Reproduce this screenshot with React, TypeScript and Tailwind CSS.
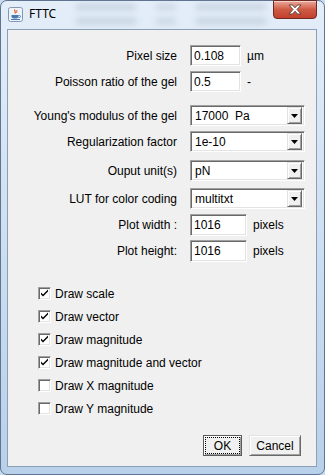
import React from "react";

const sunken =
  "bg-white border border-t-[#a0a0a0] border-l-[#a0a0a0] border-r-white border-b-white shadow-[inset_1px_1px_0_#696969,inset_-1px_-1px_0_#e3e3e3]";
const raised =
  "bg-[#f0f0f0] border border-t-[#e3e3e3] border-l-[#e3e3e3] border-r-[#696969] border-b-[#696969] shadow-[inset_1px_1px_0_#ffffff,inset_-1px_-1px_0_#a0a0a0]";

function JavaIcon() {
  return (
    <svg width="15" height="15" viewBox="0 0 15 15">
      <rect x="0.5" y="0.5" width="14" height="14" rx="2" fill="#eef3f9" stroke="#8497b0" />
      <path d="M7 2.5 C5.5 4 8.5 4.5 7 6.5" stroke="#e0561c" strokeWidth="1.2" fill="none" />
      <path d="M9 3 C8 4 9.5 5 8.5 6" stroke="#e0561c" strokeWidth="1" fill="none" />
      <path d="M3.5 8 h7 v1.5 c0 1.5 -1.5 2 -3.5 2 c-2 0 -3.5 -0.5 -3.5 -2 z" fill="#4a78b0" />
      <path d="M10.5 8.5 h1 a1 1 0 0 1 0 2 h-1" stroke="#4a78b0" strokeWidth="0.9" fill="none" />
      <rect x="3" y="12" width="9" height="1" fill="#4a78b0" />
    </svg>
  );
}

function CloseX() {
  return (
    <svg width="14" height="11" viewBox="0 0 14 11">
      <path
        d="M1 1 H4.5 L7 3.8 L9.5 1 H13 L9 5.5 L13 10 H9.5 L7 7.2 L4.5 10 H1 L5 5.5 Z"
        fill="#ffffff"
        stroke="#5a3a36"
        strokeWidth="0.9"
        strokeLinejoin="round"
      />
    </svg>
  );
}

function Arrow() {
  return (
    <svg width="7" height="4" viewBox="0 0 7 4">
      <path d="M0 0 H7 L3.5 4 Z" fill="#000" />
    </svg>
  );
}

function TextField({ value, w, h }: { value: string; w: string; h: string }) {
  return (
    <div className={`${sunken} ${w} ${h} flex items-center pl-[3px]`}>
      <span>{value}</span>
    </div>
  );
}

function Combo({ value }: { value: string }) {
  return (
    <div className={`${sunken} w-[115px] h-[21px] flex items-center pl-[4px] pr-[2px]`}>
      <span className="flex-1 whitespace-pre">{value}</span>
      <div className={`${raised} w-[15px] h-[17px] flex items-center justify-center`}>
        <Arrow />
      </div>
    </div>
  );
}

function Row({
  label,
  children,
  suffix,
  mt,
  h = "h-[21px]",
}: {
  label: string;
  children: React.ReactNode;
  suffix?: string;
  mt: string;
  h?: string;
}) {
  return (
    <div className={`flex items-center ${h} ${mt}`}>
      <div className="w-[169px] text-right">{label}</div>
      <div className="ml-[13px]">{children}</div>
      {suffix && <span className="ml-[6px]">{suffix}</span>}
    </div>
  );
}

function Check({ label, checked }: { label: string; checked: boolean }) {
  return (
    <div className="flex items-center h-[23px] pl-[30px]">
      <div className={`${sunken} w-[13px] h-[13px] flex items-center justify-center`}>
        {checked && (
          <svg width="9" height="9" viewBox="0 0 9 9">
            <path d="M1 3.5 L1 5.5 L3 7.5 L8 2.5 L8 0.5 L3 5.5 Z" fill="#000" />
          </svg>
        )}
      </div>
      <span className="ml-[4px]">{label}</span>
    </div>
  );
}

export default function App() {
  return (
    <div className="w-[325px] h-[475px] overflow-hidden bg-[#c9dcef] font-['Liberation_Sans',Arial,sans-serif] text-[12px] text-black leading-none">
      <div className="w-full h-full flex flex-col rounded-[7px] border border-[#5f7490] bg-gradient-to-b from-[#e4eef9] via-[#cddff1] to-[#b9d0ea]">
        {/* title bar */}
        <div className="h-[28px] flex relative">
          <div className="flex items-start pl-[7px] pt-[6px]">
            <JavaIcon />
            <span className="ml-[6px] mt-[1px] font-['Noto_Sans',sans-serif] text-[12px] text-[#000]">
              FTTC
            </span>
          </div>
          <div className="flex-1 flex flex-col gap-[8px] pt-[3px] pl-[20px] opacity-40">
            <div className="flex gap-[20px]">
              <div className="w-[60px] h-[6px] bg-[#9aa9bb] blur-[3px]" />
              <div className="w-[20px] h-[6px] bg-[#a6b4c4] blur-[3px]" />
              <div className="w-[70px] h-[6px] bg-[#9aa9bb] blur-[3px]" />
            </div>
            <div className="flex gap-[20px]">
              <div className="w-[60px] h-[6px] bg-[#9aa9bb] blur-[3px]" />
              <div className="w-[20px] h-[6px] bg-[#a6b4c4] blur-[3px]" />
              <div className="w-[70px] h-[6px] bg-[#9aa9bb] blur-[3px]" />
            </div>
          </div>
          <div className="w-[44px] h-[19px] mr-[7px] -mt-[1px] rounded-b-[4px] border border-[#6e2a22] bg-gradient-to-b from-[#e9a99b] via-[#cf5a44] to-[#c2402c] shadow-[inset_0_1px_0_rgba(255,255,255,0.5)] flex items-center justify-center">
            <CloseX />
          </div>
        </div>
        {/* body */}
        <div className="flex-1 flex pl-[6px] pr-[7px] pb-[7px]">
          <div className="flex-1 flex flex-col border border-[#8b9fb8] bg-[#f0f0f0]">
            <Row label="Pixel size" suffix="µm" mt="mt-[15px]">
              <TextField value="0.108" w="w-[51px]" h="h-[21px]" />
            </Row>
            <Row label="Poisson ratio of the gel" suffix="-" mt="mt-[5px]">
              <TextField value="0.5" w="w-[51px]" h="h-[21px]" />
            </Row>
            <Row label="Young's modulus of the gel" mt="mt-[13px]">
              <Combo value="17000  Pa" />
            </Row>
            <Row label="Regularization factor" mt="mt-[5px]">
              <Combo value="1e-10" />
            </Row>
            <Row label="Ouput unit(s)" mt="mt-[8px]">
              <Combo value="pN" />
            </Row>
            <Row label="LUT for color coding" mt="mt-[7px]">
              <Combo value="multitxt" />
            </Row>
            <Row label="Plot width :" suffix="pixels" mt="mt-[5px]" h="h-[22px]">
              <TextField value="1016" w="w-[57px]" h="h-[22px]" />
            </Row>
            <Row label="Plot height:" suffix="pixels" mt="mt-[4px]" h="h-[22px]">
              <TextField value="1016" w="w-[57px]" h="h-[22px]" />
            </Row>
            <div className="mt-[20px] flex flex-col">
              <Check label="Draw scale" checked />
              <Check label="Draw vector" checked />
              <Check label="Draw magnitude" checked />
              <Check label="Draw magnitude and vector" checked />
              <Check label="Draw X magnitude" checked={false} />
              <Check label="Draw Y magnitude" checked={false} />
            </div>
            <div className="flex-1" />
            <div className="flex justify-end gap-[7px] pr-[15px] pb-[10px]">
              <div className="w-[39px] h-[21px] p-[1px] bg-[#f0f0f0] border border-[#5a5a5a] shadow-[inset_1px_1px_0_#fff,inset_-1px_-1px_0_#a0a0a0]">
                <div className="w-full h-full border border-dotted border-[#000] flex items-center justify-center">
                  OK
                </div>
              </div>
              <div className={`${raised} w-[52px] h-[21px] flex items-center justify-center`}>
                Cancel
              </div>
            </div>
          </div>
        </div>
      </div>
    </div>
  );
}
